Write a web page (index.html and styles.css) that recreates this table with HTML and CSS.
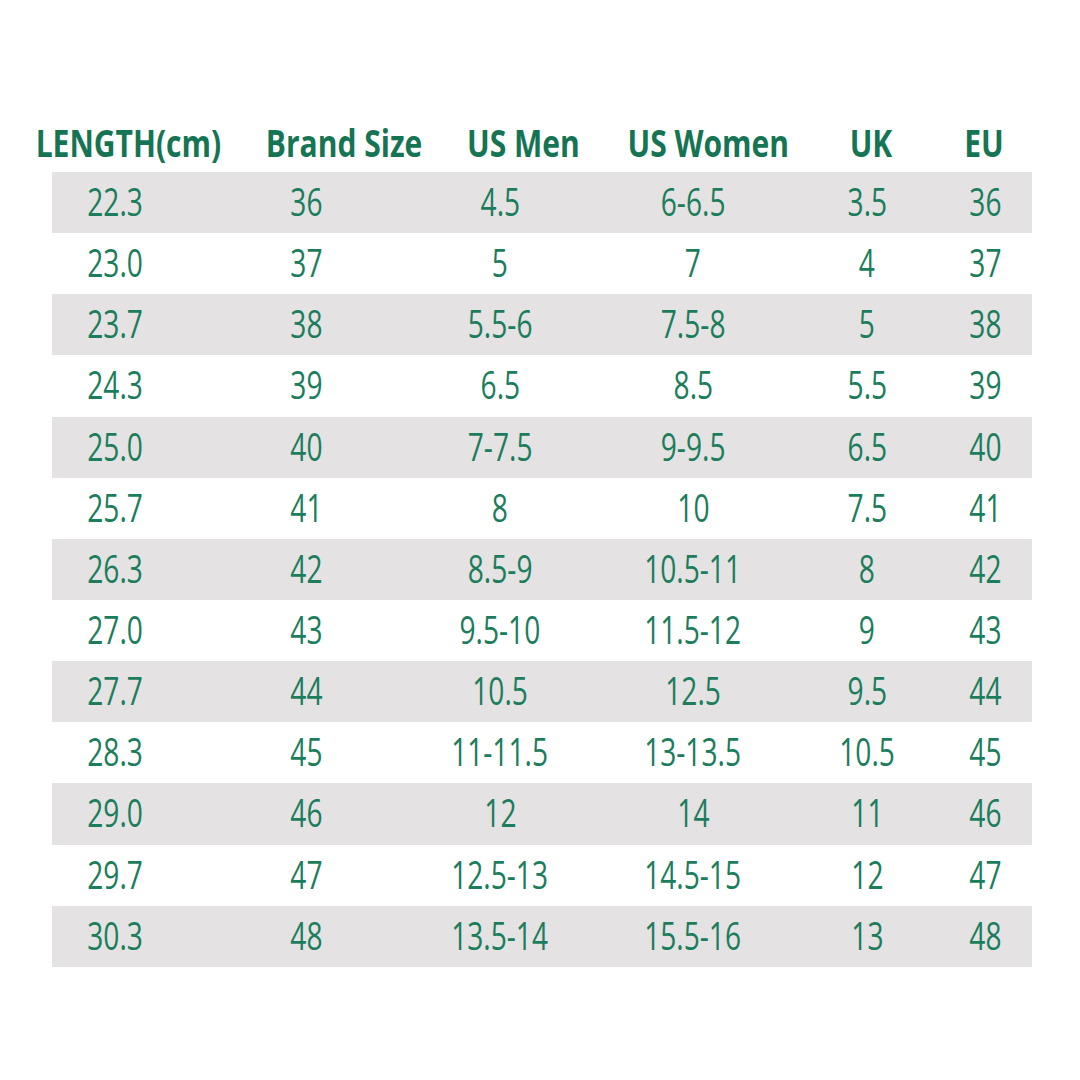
FILE: index.html
```html
<!DOCTYPE html>
<html>
<head>
<meta charset="utf-8">
<link rel="stylesheet" href="styles.css">
</head>
<body>
<div class="chart">
  <div class="head">
    <div><span>LENGTH(cm)</span></div><div><span>Brand Size</span></div><div><span>US Men</span></div><div><span>US Women</span></div><div><span>UK</span></div><div><span>EU</span></div>
  </div>
  <div class="body">
    <div class="row alt"><div><span>22.3</span></div><div><span>36</span></div><div><span>4.5</span></div><div><span>6-6.5</span></div><div><span>3.5</span></div><div><span>36</span></div></div>
    <div class="row"><div><span>23.0</span></div><div><span>37</span></div><div><span>5</span></div><div><span>7</span></div><div><span>4</span></div><div><span>37</span></div></div>
    <div class="row alt"><div><span>23.7</span></div><div><span>38</span></div><div><span>5.5-6</span></div><div><span>7.5-8</span></div><div><span>5</span></div><div><span>38</span></div></div>
    <div class="row"><div><span>24.3</span></div><div><span>39</span></div><div><span>6.5</span></div><div><span>8.5</span></div><div><span>5.5</span></div><div><span>39</span></div></div>
    <div class="row alt"><div><span>25.0</span></div><div><span>40</span></div><div><span>7-7.5</span></div><div><span>9-9.5</span></div><div><span>6.5</span></div><div><span>40</span></div></div>
    <div class="row"><div><span>25.7</span></div><div><span>41</span></div><div><span>8</span></div><div><span>10</span></div><div><span>7.5</span></div><div><span>41</span></div></div>
    <div class="row alt"><div><span>26.3</span></div><div><span>42</span></div><div><span>8.5-9</span></div><div><span>10.5-11</span></div><div><span>8</span></div><div><span>42</span></div></div>
    <div class="row"><div><span>27.0</span></div><div><span>43</span></div><div><span>9.5-10</span></div><div><span>11.5-12</span></div><div><span>9</span></div><div><span>43</span></div></div>
    <div class="row alt"><div><span>27.7</span></div><div><span>44</span></div><div><span>10.5</span></div><div><span>12.5</span></div><div><span>9.5</span></div><div><span>44</span></div></div>
    <div class="row"><div><span>28.3</span></div><div><span>45</span></div><div><span>11-11.5</span></div><div><span>13-13.5</span></div><div><span>10.5</span></div><div><span>45</span></div></div>
    <div class="row alt"><div><span>29.0</span></div><div><span>46</span></div><div><span>12</span></div><div><span>14</span></div><div><span>11</span></div><div><span>46</span></div></div>
    <div class="row"><div><span>29.7</span></div><div><span>47</span></div><div><span>12.5-13</span></div><div><span>14.5-15</span></div><div><span>12</span></div><div><span>47</span></div></div>
    <div class="row alt"><div><span>30.3</span></div><div><span>48</span></div><div><span>13.5-14</span></div><div><span>15.5-16</span></div><div><span>13</span></div><div><span>48</span></div></div>
  </div>
</div>
</body>
</html>
```
FILE: styles.css
```css
html, body {
  margin: 0;
  padding: 0;
  background: #ffffff;
}
body {
  width: 1080px;
  height: 1080px;
  overflow: hidden;
  font-family: "Open Sans", "Liberation Sans", sans-serif;
}
.chart {
  padding-top: 117px;
}
.head {
  display: grid;
  grid-template-columns: 200px 232px 126px 244px 82px 144px;
  padding-left: 28px;
  height: 50px;
  line-height: 50px;
  margin-bottom: 5px;
  font-size: 38px;
  font-weight: 700;
  color: #157453;
  white-space: nowrap;
}
.head > div,
.row > div {
  display: flex;
  justify-content: center;
  min-width: 0;
}
.head span {
  display: inline-block;
  flex: none;
  transform: scaleX(0.79);
}
.row span {
  display: inline-block;
  flex: none;
  transform: scaleX(0.75);
}
.body {
  margin-left: 52px;
  width: 980px;
}
.row {
  display: grid;
  grid-template-columns: 150px 208px 180px 206px 142px 94px;
  height: 61.15px;
  line-height: 59px;
  font-size: 37.5px;
  font-weight: 500;
  color: #1b7d5c;
  white-space: nowrap;
}
.row > div:first-child {
  padding-right: 24px;
}
.row.alt {
  background: #e4e2e3;
}
```
